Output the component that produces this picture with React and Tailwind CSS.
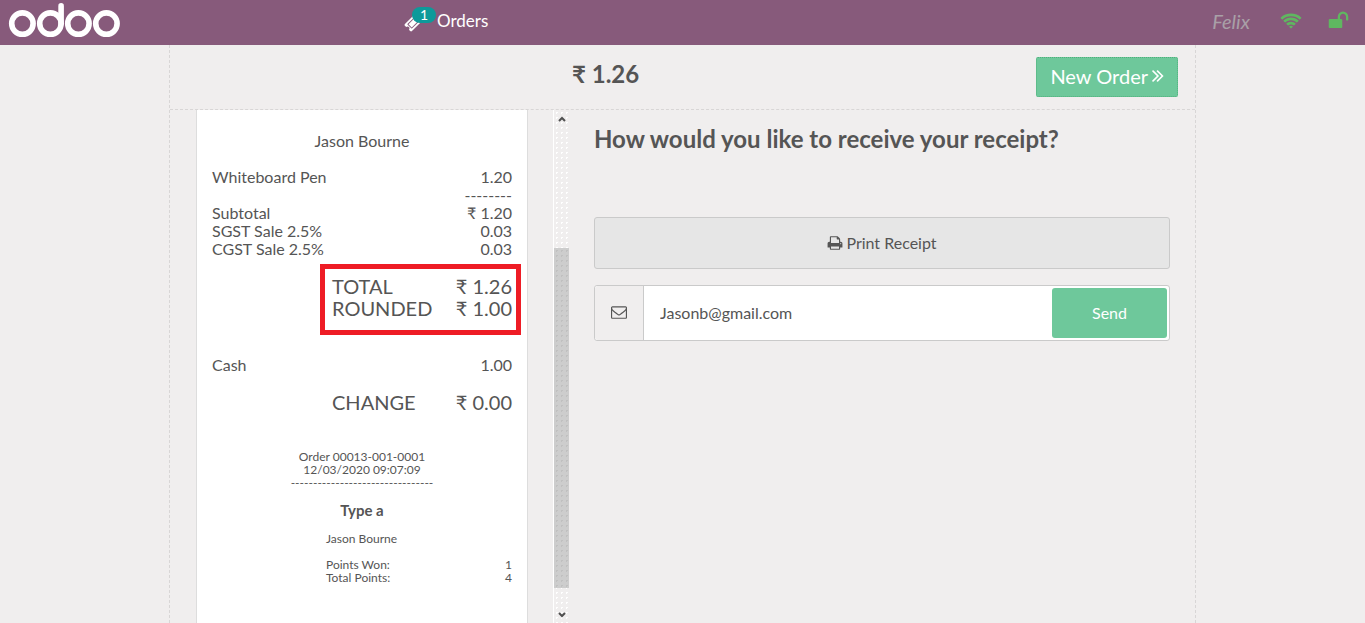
import { useState } from "react";

const taxLines = [
  { label: "Subtotal", value: "₹ 1.20" },
  { label: "SGST Sale 2.5%", value: "0.03" },
  { label: "CGST Sale 2.5%", value: "0.03" },
];

function Icon({ d, className, viewBox = "0 0 1792 1792" }) {
  return (
    <svg viewBox={viewBox} fill="currentColor" className={className} aria-hidden="true">
      <path d={d} />
    </svg>
  );
}

const icons = {
  ticket:
    "M1024 452l316 316-572 572-316-316zm-211 979l618-618q19-19 19-45t-19-45l-362-362q-18-18-45-18t-45 18l-618 618q-19 19-19 45t19 45l362 362q18 18 45 18t45-18zm889-637l-907 908q-37 37-90.5 37t-90.5-37l-126-126q56-56 56-136t-56-136-136-56-136 56l-125-126q-37-37-37-90.5t37-90.5l907-906q37-37 90.5-37t90.5 37l125 125q-56 56-56 136t56 136 136 56 136-56l126 125q37 37 37 90.5t-37 90.5z",
  wifi:
    "M1024 1523q-20 0-93-73.5t-73-93.5q0-32 62.5-54t103.5-22 103.5 22 62.5 54q0 20-73 93.5t-93 73.5zm270-271q-2 0-40-25t-101.5-50-128.5-25-128.5 25-101 50-40.5 25q-18 0-93.5-75t-75.5-93q0-13 10-23 78-77 196-121t233-44 233 44 196 121q10 10 10 23 0 18-75.5 93t-93.5 75zm273-272q-11 0-23-8-136-105-252-154.5t-268-49.5q-85 0-170.5 22t-149 53-113.5 62-79 53-31 22q-17 0-92-75t-75-93q0-12 10-22 132-132 320-205t380-73 380 73 320 205q10 10 10 22 0 18-75 93t-92 75zm271-271q-11 0-22-9-179-157-371.5-236.5t-420.5-79.5-420.5 79.5-371.5 236.5q-11 9-22 9-17 0-92.5-75t-75.5-93q0-13 10-23 187-186 445-288t527-102 527 102 445 288q10 10 10 23 0 18-75.5 93t-92.5 75z",
  unlock:
    "M1728 576v256q0 26-19 45t-45 19h-64q-26 0-45-19t-19-45v-256q0-106-75-181t-181-75-181 75-75 181v192h96q40 0 68 28t28 68v576q0 40-28 68t-68 28h-960q-40 0-68-28t-28-68v-576q0-40 28-68t68-28h672v-192q0-185 131.5-316.5t316.5-131.5 316.5 131.5 131.5 316.5z",
  doubleRight:
    "M979 960q0 13-10 23l-466 466q-10 10-23 10t-23-10l-50-50q-10-10-10-23t10-23l393-393-393-393q-10-10-10-23t10-23l50-50q10-10 23-10t23 10l466 466q10 10 10 23zm384 0q0 13-10 23l-466 466q-10 10-23 10t-23-10l-50-50q-10-10-10-23t10-23l393-393-393-393q-10-10-10-23t10-23l50-50q10-10 23-10t23 10l466 466q10 10 10 23z",
  print:
    "M448 1536h896v-256h-896v256zm0-640h896v-384h-160q-40 0-68-28t-28-68v-160h-640v640zm1152 64q0-26-19-45t-45-19-45 19-19 45 19 45 45 19 45-19 19-45zm128 0v416q0 13-9.5 22.5t-22.5 9.5h-224v160q0 40-28 68t-68 28h-960q-40 0-68-28t-28-68v-160h-224q-13 0-22.5-9.5t-9.5-22.5v-416q0-79 56.5-135.5t135.5-56.5h64v-544q0-40 28-68t68-28h672q40 0 88 20t76 48l152 152q28 28 48 76t20 88v256h64q79 0 135.5 56.5t56.5 135.5z",
  envelope:
    "M1664 1504v-768q-32 36-69 66-268 206-426 338-51 43-83 67t-86.5 48.5-102.5 24.5h-2q-48 0-102.5-24.5t-86.5-48.5-83-67q-158-132-426-338-37-30-69-66v768q0 13 9.5 22.5t22.5 9.5h1472q13 0 22.5-9.5t9.5-22.5zm0-1051v-24.5l-.5-13-3-12.5-5.5-9-9-7.5-14-2.5h-1472q-13 0-22.5 9.5t-9.5 22.5q0 168 147 284 193 152 401 317 6 5 35 29.5t46 37.5 44.5 31.5 50.5 27.5 43 9h2q20 0 43-9t50.5-27.5 44.5-31.5 46-37.5 35-29.5q208-165 401-317 54-43 100.5-115.5t46.5-131.5zm128-37v1088q0 66-47 113t-113 47h-1472q-66 0-113-47t-47-113v-1088q0-66 47-113t113-47h1472q66 0 113 47t47 113z",
};

function Logo() {
  return (
    <svg
      width="112"
      height="36"
      viewBox="0 0 112 36"
      fill="none"
      stroke="white"
      strokeWidth="5.6"
      strokeLinecap="round"
      role="img"
      aria-label="odoo"
    >
      <circle cx="14.4" cy="20.6" r="10.7" />
      <circle cx="42.4" cy="20.6" r="10.7" />
      <path d="M53.1 2.9v17.7" />
      <circle cx="70.4" cy="20.6" r="10.7" />
      <circle cx="98.4" cy="20.6" r="10.7" />
    </svg>
  );
}

function Navbar() {
  return (
    <header className="flex h-[45px] items-center justify-between bg-[#875a7b] pb-1 text-white">
      <div className="flex flex-1 items-center">
        <div className="w-[404px] pl-2">
          <Logo />
        </div>
        <button type="button" className="flex items-center text-[17px]">
          <span className="relative mr-[15px] block">
            <Icon d={icons.ticket} className="mt-1 h-[18px] w-[18px]" />
            <span className="absolute -top-[3px] left-2 flex h-4 w-6 items-center justify-center rounded-full bg-[#0d9a9a] text-sm">
              1
            </span>
          </span>
          Orders
        </button>
      </div>
      <div className="flex items-center pr-4">
        <span className="mr-[30px] text-xl text-[#a9a0a7] italic">Felix</span>
        <button type="button" aria-label="Connection status" className="mr-[26px] text-[#5fb760]">
          <Icon d={icons.wifi} viewBox="0 128 2048 1408" className="h-4 w-[22px]" />
        </button>
        <button type="button" aria-label="Close session" className="text-[#5fb760]">
          <Icon d={icons.unlock} className="h-[21px] w-[21px]" />
        </button>
      </div>
    </header>
  );
}

function Row({ label, value }) {
  return (
    <div className="flex justify-between">
      <span>{label}</span>
      <span>{value}</span>
    </div>
  );
}

function Receipt() {
  return (
    <div className="w-[332px] border-x border-[#dddddd] bg-white px-[15px] pt-[22px] leading-[18px]">
      <p className="text-center">Jason Bourne</p>

      <div className="mt-[18px]">
        <Row label="Whiteboard Pen" value="1.20" />
        <p className="text-right">--------</p>
        {taxLines.map((line) => (
          <Row key={line.label} label={line.label} value={line.value} />
        ))}
      </div>

      <div className="relative mt-[17px] ml-[40%] text-xl leading-[22px]">
        <Row label="TOTAL" value="₹ 1.26" />
        <Row label="ROUNDED" value="₹ 1.00" />
        <div className="pointer-events-none absolute -top-[11px] -right-[9px] -bottom-4 -left-3 border-5 border-[#ee1c25]" />
      </div>

      <div className="mt-[37px]">
        <Row label="Cash" value="1.00" />
      </div>
      <div className="mt-[17px] ml-[40%] text-xl leading-[22px]">
        <Row label="CHANGE" value="₹ 0.00" />
      </div>

      <div className="mt-[37px] text-center text-xs leading-[13px]">
        <p>Order 00013-001-0001</p>
        <p>12/03/2020 09:07:09</p>
        <p>--------------------------------</p>
        <p className="mt-3 text-[15px] leading-[18px] font-bold">Type a</p>
      </div>
      <div className="mt-[13px] ml-[38%] text-xs leading-[13px]">
        <p className="mb-[13px]">Jason Bourne</p>
        <Row label="Points Won:" value="1" />
        <Row label="Total Points:" value="4" />
      </div>
    </div>
  );
}

function ScrollTrack() {
  return (
    <div
      className="flex w-4 flex-col items-center border-l border-white bg-[#f0eeee] bg-[radial-gradient(#ffffff_1px,transparent_1px)] bg-size-[5px_5px] text-[#505050]"
      aria-hidden="true"
    >
      <svg viewBox="0 0 8 6" className="mt-[6px] mb-1 h-[6px] w-2" fill="none" stroke="currentColor" strokeWidth="2">
        <path d="M1 5l3-3 3 3" />
      </svg>
      <div className="grow-[121]" />
      <div className="w-full grow-[339] bg-[#cdcdcd] bg-[radial-gradient(#c0c0c0_1px,transparent_1px)] bg-size-[5px_5px]" />
      <div className="grow-[20]" />
      <svg viewBox="0 0 8 6" className="mt-1 mb-[5px] h-[6px] w-2" fill="none" stroke="currentColor" strokeWidth="2">
        <path d="M1 1l3 3 3-3" />
      </svg>
    </div>
  );
}

function ReceiptOptions() {
  const [email, setEmail] = useState("Jasonb@gmail.com");

  return (
    <section className="flex-1 px-[25px] pt-[13px]">
      <h2 className="text-2xl font-bold">How would you like to receive your receipt?</h2>
      <button
        type="button"
        className="mt-[62px] flex h-[52px] w-full items-center justify-center gap-[3px] rounded-[3px] border border-[#cacaca] bg-[#e6e6e6]"
      >
        <Icon d={icons.print} className="h-4 w-4" />
        Print Receipt
      </button>
      <form
        onSubmit={(e) => e.preventDefault()}
        className="mt-4 flex h-14 rounded-[3px] border border-[#cacaca] bg-white"
      >
        <label
          htmlFor="email"
          aria-label="Email address"
          className="flex w-[49px] items-center justify-center rounded-l-[3px] border-r border-[#cacaca] bg-[#f0eeee] pb-0.5"
        >
          <Icon d={icons.envelope} className="h-4 w-4" />
        </label>
        <input
          id="email"
          type="email"
          value={email}
          onChange={(e) => setEmail(e.target.value)}
          className="min-w-0 flex-1 px-4 outline-none"
        />
        <button type="submit" className="m-0.5 w-[115px] rounded-[3px] bg-[#6ec89b] text-white">
          Send
        </button>
      </form>
    </section>
  );
}

export default function App() {
  return (
    <div className="flex min-h-screen flex-col bg-[#f0eeee] font-['Lato',sans-serif] text-base text-[#555555]">
      <Navbar />
      <main className="mx-auto flex w-full max-w-[1027px] flex-1 flex-col border-x border-dashed border-[#d8d6d6]">
        <div className="flex h-[65px] items-center justify-between border-b border-dashed border-[#d8d6d6] pr-[17px] pl-[402px]">
          <h1 className="pb-1.5 text-2xl font-bold">₹ 1.26</h1>
          <button
            type="button"
            className="flex h-10 items-center gap-1 rounded-xs border border-dotted border-[#4fb07c] bg-[#6ec89b] px-[13px] pb-0.5 text-xl text-white"
          >
            New Order
            <Icon d={icons.doubleRight} viewBox="384 448 1024 1024" className="h-3 w-3" />
          </button>
        </div>
        <div className="flex flex-1">
          <div className="flex w-[383px] pl-[26px]">
            <Receipt />
          </div>
          <ScrollTrack />
          <ReceiptOptions />
        </div>
      </main>
    </div>
  );
}
